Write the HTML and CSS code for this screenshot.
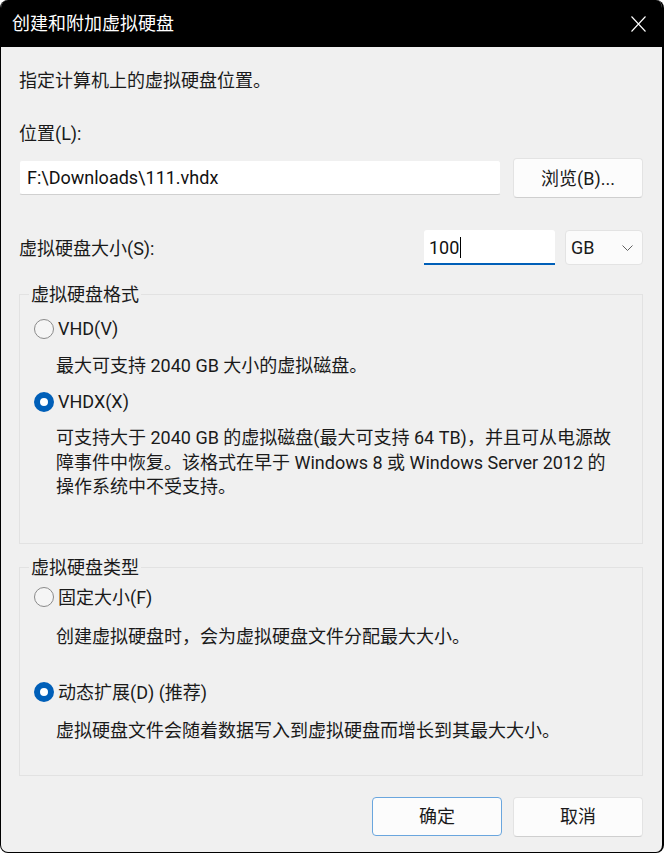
FILE: index.html
```html
<!DOCTYPE html>
<html lang="zh-CN">
<head>
<meta charset="utf-8">
<title>创建和附加虚拟硬盘</title>
<link rel="stylesheet" href="styles.css">
</head>
<body>
<div class="window">
  <div class="titlebar">
    <span class="title">创建和附加虚拟硬盘</span>
    <svg class="close" width="15" height="16" viewBox="0 0 15 16" aria-hidden="true">
      <path d="M0.5 0.5 L14.5 15.5 M14.5 0.5 L0.5 15.5" stroke="#fff" stroke-width="1.1" fill="none"/>
    </svg>
  </div>
  <div class="content">
    <p class="intro">指定计算机上的虚拟硬盘位置。</p>
    <div class="label-loc">位置(L):</div>
    <div class="path-row">
      <div class="textbox path">F:\Downloads\111.vhdx</div>
      <button class="btn">浏览(B)...</button>
    </div>
    <div class="size-row">
      <span class="size-label">虚拟硬盘大小(S):</span>
      <div class="textbox size">100<span class="caret"></span></div>
      <div class="select">
        <span>GB</span>
        <svg class="chev" width="11" height="6" viewBox="0 0 11 6" aria-hidden="true">
          <path d="M0.5 0.5 L5.5 5.5 L10.5 0.5" stroke="#606060" stroke-width="1" fill="none"/>
        </svg>
      </div>
    </div>

    <fieldset class="group group-format">
      <legend>虚拟硬盘格式</legend>
      <div class="radio-row r-vhd"><span class="radio"></span><span>VHD(V)</span></div>
      <div class="desc d-vhd">最大可支持 2040 GB 大小的虚拟磁盘。</div>
      <div class="radio-row r-vhdx"><span class="radio checked"></span><span>VHDX(X)</span></div>
      <div class="para">可支持大于 2040 GB 的虚拟磁盘(最大可支持 64 TB)，并且可从电源故<br>障事件中恢复。该格式在早于 Windows 8 或 Windows Server 2012 的<br>操作系统中不受支持。</div>
    </fieldset>

    <fieldset class="group group-type">
      <legend>虚拟硬盘类型</legend>
      <div class="radio-row r-fixed"><span class="radio"></span><span>固定大小(F)</span></div>
      <div class="desc d-fixed">创建虚拟硬盘时，会为虚拟硬盘文件分配最大大小。</div>
      <div class="radio-row r-dyn"><span class="radio checked"></span><span>动态扩展(D) (推荐)</span></div>
      <div class="desc d-dyn">虚拟硬盘文件会随着数据写入到虚拟硬盘而增长到其最大大小。</div>
    </fieldset>

    <div class="actions">
      <button class="btn primary">确定</button>
      <button class="btn">取消</button>
    </div>
  </div>
</div>
</body>
</html>
```

FILE: styles.css
```css
* { box-sizing: border-box; }
html, body { margin: 0; padding: 0; background: #fff; }
body {
  font-family: Roboto, "Noto Sans CJK SC", sans-serif;
  font-size: 18px;
  line-height: 25px;
  color: #1a1a1a;
}
.window {
  width: 664px;
  height: 853px;
  background: #f0f0f0;
  border: 1px solid #000;
  border-top: 0;
  border-right-width: 2px;
  border-radius: 8px;
  overflow: hidden;
  display: flex;
  flex-direction: column;
}
.titlebar {
  flex: none;
  height: 47px;
  background: #000;
  color: #fff;
  display: flex;
  align-items: center;
  justify-content: space-between;
  padding: 0 16px 0 11px;
}
.title { line-height: 25px; }
.close { display: block; }

.content {
  padding: 21px 19px 0 18px;
  display: flex;
  flex-direction: column;
}
.intro { margin: 0; }
.label-loc { margin-top: 28px; }

.path-row {
  display: flex;
  align-items: flex-start;
  gap: 12px;
  margin-top: 12px;
}
.textbox {
  background: #fff;
  height: 35px;
  border: 1px solid #f0f0f0;
  border-bottom: 1px solid #d0d0d0;
  border-radius: 3px;
  display: flex;
  align-items: center;
  padding: 0 7px;
  color: #111;
}
.path { flex: 1; margin-top: 2px; }

.btn {
  font: inherit;
  color: #1a1a1a;
  width: 130px;
  height: 40px;
  background: #fcfcfc;
  border: 1px solid #e3e3e3;
  border-bottom-color: #cfcfcf;
  border-radius: 4px;
  padding: 0;
}
.btn.primary {
  border: 1px solid #6aa6de;
  height: 39px;
}

.size-row {
  display: flex;
  align-items: center;
  gap: 10px;
  margin-top: 32px;
  height: 35px;
}
.size-label { flex: 1; padding-top: 2px; }
.size {
  width: 131px;
  border: none;
  border-bottom: 2px solid #005fb8;
  border-radius: 3px 3px 0 0;
  padding-left: 5px;
  padding-top: 2px;
}
.caret {
  display: inline-block;
  width: 1px;
  height: 21px;
  background: #000;
  margin-left: 1px;
}
.select {
  width: 78px;
  height: 35px;
  background: #fbfbfb;
  border: 1px solid #e3e3e3;
  border-radius: 4px;
  display: flex;
  align-items: center;
  justify-content: space-between;
  padding: 0 9px 0 5px;
}
.chev { display: block; margin-top: 1px; }

.group {
  margin: 0;
  border: 1px solid #e2e2e2;
  padding: 0 14px;
  min-width: 0;
}
.group legend {
  padding: 0 2px;
  margin-left: -5px;
  line-height: 25px;
}
.group-format { margin-top: 17px; padding-bottom: 43px; }
.group-type { margin-top: 11px; padding-bottom: 32px; }

.radio-row {
  display: flex;
  align-items: center;
  gap: 4px;
}
.radio {
  width: 20px;
  height: 20px;
  border-radius: 50%;
  border: 1px solid #8a8a8a;
  background: #f5f5f5;
  flex: none;
}
.radio.checked {
  border: 6px solid #005fb8;
  background: #fff;
  width: 20px;
  height: 20px;
}
.desc { padding-left: 22px; }
.para { padding-left: 22px; line-height: 24.5px; margin-top: 12px; }

.r-vhd { margin-top: 9px; }
.d-vhd { margin-top: 12px; }
.r-vhdx { margin-top: 11px; }

.r-fixed { margin-top: 5px; }
.d-fixed { margin-top: 14px; }
.r-dyn { margin-top: 31px; }
.d-dyn { margin-top: 13px; }

.actions {
  display: flex;
  justify-content: flex-end;
  gap: 11px;
  margin-top: 21px;
}
```
